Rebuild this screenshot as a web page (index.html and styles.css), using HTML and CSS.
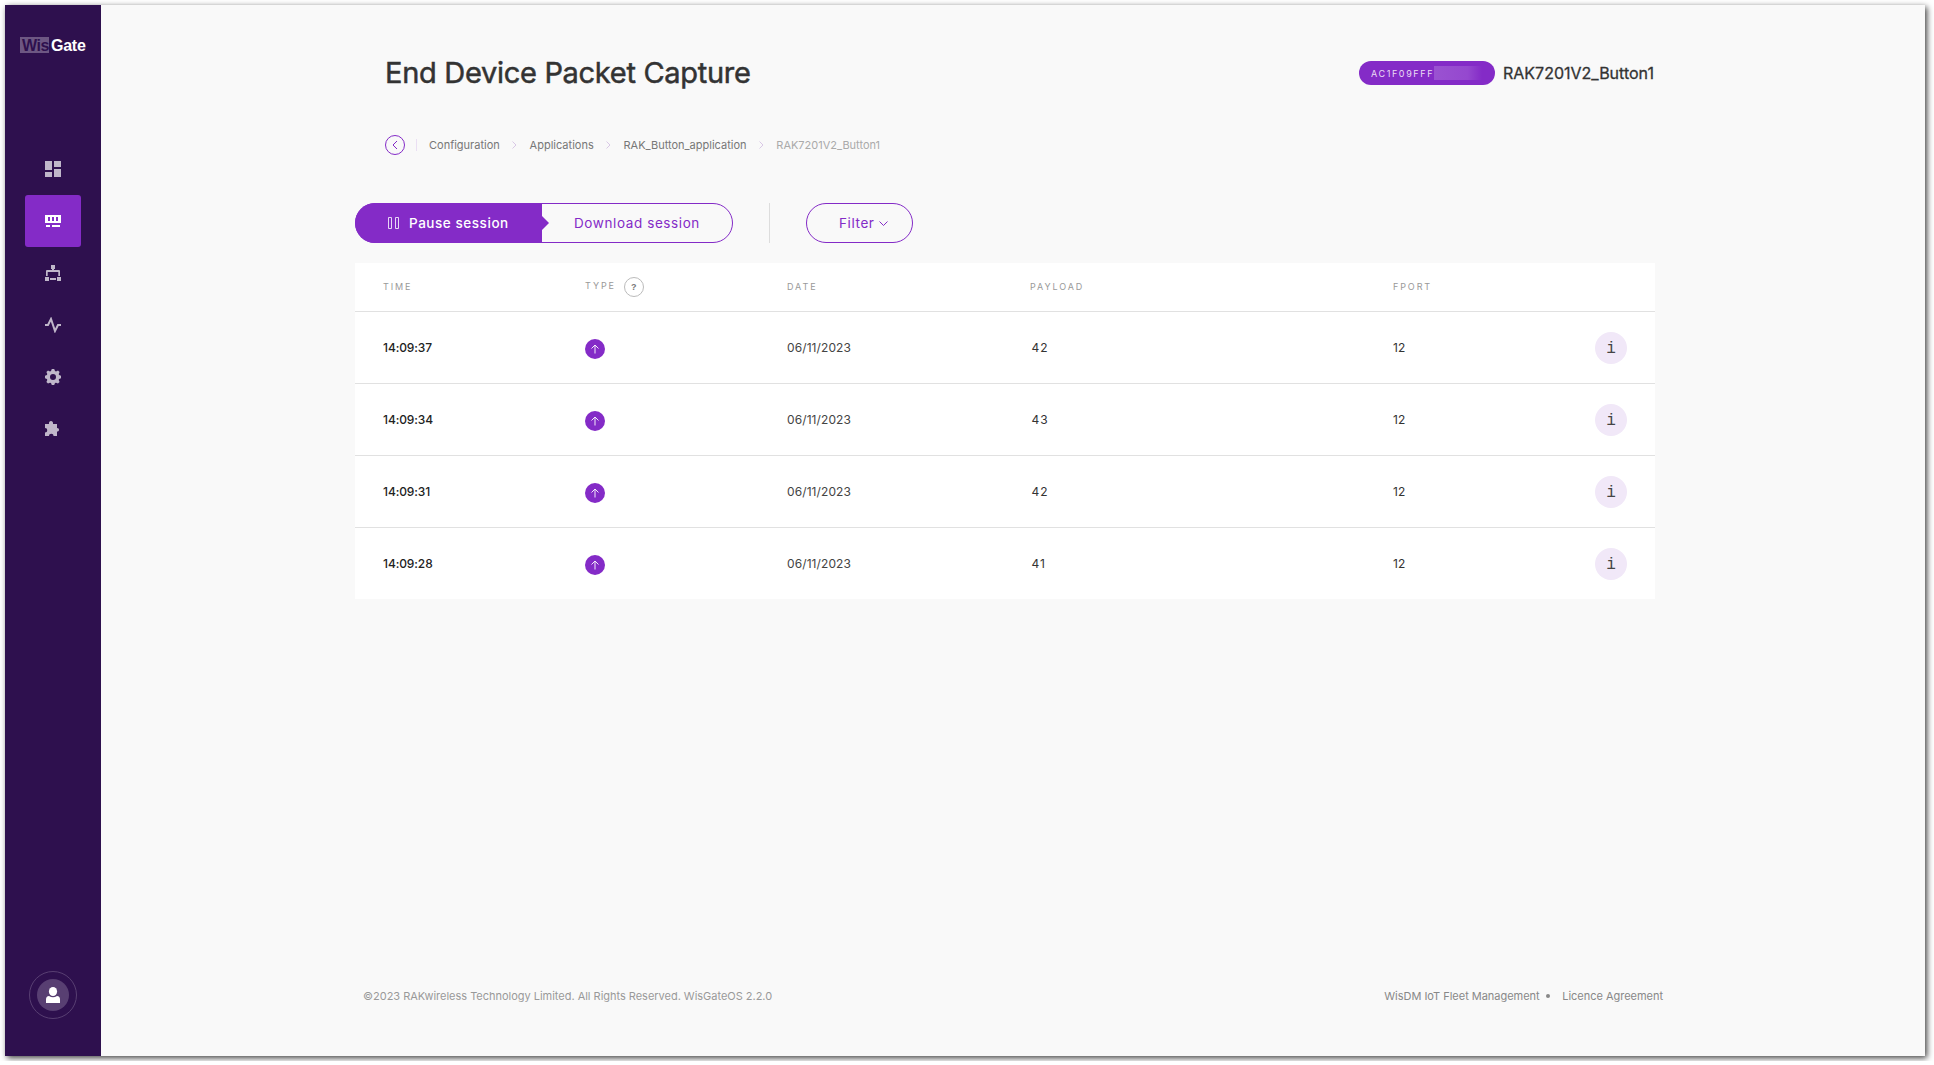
FILE: index.html
```html
<!DOCTYPE html>
<html lang="en">
<head>
<meta charset="utf-8">
<title>End Device Packet Capture</title>
<link rel="stylesheet" href="styles.css">
</head>
<body>
<div class="window">
  <aside class="sidebar">
    <div class="logo"><span class="logo-wis">Wis</span><span class="logo-gate">Gate</span></div>
    <nav class="nav">
      <a class="nav-item"><svg width="16" height="16" viewBox="0 0 16 16"><path d="M0 0h7v9H0zM9 0h7v6H9zM0 11h7v5H0zM9 8h7v8H9z"/></svg></a>
      <a class="nav-item active"><svg width="16" height="16" viewBox="0 0 16 16"><path fill-rule="evenodd" d="M0 2h16v8H0zM3 4v4h2V4zM7 4v4h2V4zM11 4v4h2V4zM1 12h4v2H1zM7 12h8v2H7z"/></svg></a>
      <a class="nav-item"><svg width="16" height="16" viewBox="0 0 16 16"><path d="M6 0h4v4H9v1h5q1 0 1 1v5h-1.700V7H2.700v4H1V6q0-1 1-1h5V4H6zM0 12h4v4H0zM12 12h4v4h-4zM5 13h6v2H5z"/></svg></a>
      <a class="nav-item"><svg width="16" height="16" viewBox="0 0 16 16"><path class="pulse" d="M0 8h3l3-6 4 12 3-6h3"/></svg></a>
      <a class="nav-item"><svg width="16" height="16" viewBox="0 0 16 16"><path fill-rule="evenodd" d="M6.800 0h2.400l.8 2 1 .4 2-.9 1.600 1.600-.9 2 .4.900 1.900.8v2.400l-1.900.8-.4 1 .9 2-1.600 1.600-2-.9-1 .4-.8 1.900H6.800L6 14.100l-1-.4-2 .9L1.400 13l.9-2-.4-1L0 9.200V6.800L1.900 6l.4-.9-.9-2L3 1.500l2 .9 1-.4zM8 5a3 3 0 1 0 0 6 3 3 0 0 0 0-6z"/></svg></a>
      <a class="nav-item"><svg width="16" height="16" viewBox="0 0 16 16"><path d="M0 3h4c-.4-2 .8-3 2-3s2.400 1 2 3h4v4c1.500 0 2 .8 2 1.800S13.500 10.600 12 10.600V15H8.500c0-1.500-.8-2.300-2.200-2.300S4 13.500 4 15H0v-3.500c1.500 0 2.200-.8 2.200-2.200S1.500 7 0 7z"/></svg></a>
    </nav>
    <a class="avatar"><span class="avatar-disc"><svg width="14" height="16" viewBox="0 0 14 16"><ellipse cx="7" cy="4.500" rx="4.100" ry="4.500"/><path d="M0 16v-3.500Q0 9.300 3 9q4 2.500 8 0 3 .3 3 3.500V16z"/></svg></span></a>
  </aside>
  <main class="main">
    <header class="page-head">
      <h1 class="title">End Device Packet Capture</h1>
      <div class="device"><span class="eui"><span>AC1F09FFF</span><span class="eui-hidden"></span></span><span class="device-name">RAK7201V2_Button1</span></div>
    </header>
    <nav class="crumbs">
      <a class="back"><svg width="20" height="20" viewBox="0 0 20 20"><circle cx="10" cy="10" r="9.500"/><path d="M12 6l-4 4 4 4"/></svg></a>
      <span class="crumb-rule"></span>
      <a class="crumb">Configuration</a>
      <svg class="sep" width="5" height="8" viewBox="0 0 5 8"><path d="M.5.500 4 4 .5 7.500"/></svg>
      <a class="crumb">Applications</a>
      <svg class="sep" width="5" height="8" viewBox="0 0 5 8"><path d="M.5.500 4 4 .5 7.500"/></svg>
      <a class="crumb">RAK_Button_application</a>
      <svg class="sep" width="5" height="8" viewBox="0 0 5 8"><path d="M.5.500 4 4 .5 7.500"/></svg>
      <span class="crumb current">RAK7201V2_Button1</span>
    </nav>
    <div class="toolbar">
      <div class="session">
        <button class="pause"><svg width="11" height="12" viewBox="0 0 11 12"><path d="M.5.500h3v11h-3zM7.500.500h3v11h-3z"/></svg><span>Pause session</span></button>
        <button class="download">Download session</button>
      </div>
      <span class="toolbar-rule"></span>
      <button class="filter"><span>Filter</span><svg width="9" height="5" viewBox="0 0 9 5"><path d="M.5.500l4 4 4-4"/></svg></button>
    </div>
    <section class="table">
      <div class="row head">
        <span>TIME</span><span class="type-head"><span>TYPE</span><i class="help">?</i></span><span>DATE</span><span>PAYLOAD</span><span>FPORT</span>
      </div>
      <div class="row"><span class="time">14:09:37</span><svg class="up" width="20" height="20" viewBox="0 0 20 20"><circle cx="10" cy="10" r="10"/><path d="M10 14.500V6.500M6.500 9.500 10 6l3.500 3.500"/></svg><span class="date">06/11/2023</span><span class="payload">42</span><span>12</span><a class="info">i</a></div>
      <div class="row"><span class="time">14:09:34</span><svg class="up" width="20" height="20" viewBox="0 0 20 20"><circle cx="10" cy="10" r="10"/><path d="M10 14.500V6.500M6.500 9.500 10 6l3.500 3.500"/></svg><span class="date">06/11/2023</span><span class="payload">43</span><span>12</span><a class="info">i</a></div>
      <div class="row"><span class="time">14:09:31</span><svg class="up" width="20" height="20" viewBox="0 0 20 20"><circle cx="10" cy="10" r="10"/><path d="M10 14.500V6.500M6.500 9.500 10 6l3.500 3.500"/></svg><span class="date">06/11/2023</span><span class="payload">42</span><span>12</span><a class="info">i</a></div>
      <div class="row"><span class="time">14:09:28</span><svg class="up" width="20" height="20" viewBox="0 0 20 20"><circle cx="10" cy="10" r="10"/><path d="M10 14.500V6.500M6.500 9.500 10 6l3.500 3.500"/></svg><span class="date">06/11/2023</span><span class="payload">41</span><span>12</span><a class="info">i</a></div>
    </section>
    <footer class="footer">
      <span class="copyright">©2023 RAKwireless Technology Limited. All Rights Reserved. WisGateOS 2.2.0</span>
      <div class="links"><a>WisDM IoT Fleet Management</a><span class="dot"></span><a>Licence Agreement</a></div>
    </footer>
  </main>
</div>
</body>
</html>
```
FILE: styles.css
```css
* { box-sizing: border-box; }
body { margin: 0; padding: 5px; background: #fff; font-family: Inter, "Liberation Sans", sans-serif; color: #333; }
button { font: inherit; background: none; border: 0; padding: 0; margin: 0; }
svg { display: block; flex: none; }
.window { display: flex; width: 1920px; height: 1051px; background: #f9f9f9; box-shadow: 2px 2px 6px rgba(0,0,0,.75); }

.sidebar { width: 96px; flex: none; background: #2e104e; display: flex; flex-direction: column; align-items: center; }
.logo { margin-top: 32px; height: 16px; display: flex; align-items: center; font: bold 16px/17px "Liberation Sans", sans-serif; letter-spacing: -.6px; }
.logo-wis { width: 29px; height: 16px; padding-left: 2px; background: #6d5783; color: #2e104e; letter-spacing: -.4px; }
.logo-gate { width: 37px; padding-left: 2px; color: #fff; letter-spacing: -.250px; }
.nav { margin-top: 90px; display: flex; flex-direction: column; }
.nav-item { width: 56px; height: 52px; border-radius: 3px; display: flex; align-items: center; justify-content: center; fill: #c0b7ca; }
.nav-item.active { background: #842bc7; fill: #fff; }
.pulse { fill: none; stroke: #c0b7ca; stroke-width: 2; }
.avatar { margin: auto 0 37px; width: 48px; height: 48px; border: 1px solid #583f72; border-radius: 50%; display: flex; align-items: center; justify-content: center; }
.avatar-disc { width: 32px; height: 32px; border-radius: 50%; background: #583f72; display: flex; align-items: center; justify-content: center; fill: #fff; }

.main { flex: 1; padding: 0 270px 0 254px; display: flex; flex-direction: column; }
.page-head { height: 72px; margin: 32px 0 0 30px; display: flex; align-items: center; justify-content: space-between; }
.title { margin: 0; font-size: 29px; font-weight: 400; line-height: 36px; letter-spacing: -.3px; -webkit-text-stroke: .5px #333; }
.device { display: flex; align-items: center; gap: 8px; }
.eui { width: 136px; height: 24px; border-radius: 12px; background: #842bc7; color: #eadcf5; font-size: 9px; letter-spacing: 1.600px; display: flex; align-items: center; padding-left: 12px; }
.eui-hidden { width: 48px; height: 14px; background: linear-gradient(90deg,#9a52d1,#9548cf 70%,#842bc7); }
.device-name { width: 152px; font-size: 16px; font-weight: 400; -webkit-text-stroke: .3px #333; }

.crumbs { display: flex; align-items: center; height: 20px; margin: 26px 0 0 30px; font-size: 11px; color: #777; }
.back { fill: none; stroke: #842bc7; }
.crumb-rule { width: 1px; height: 12px; margin: 0 12px 0 11px; background: #eadff3; }
.sep { margin: 0 12.300px 0 12.500px; fill: none; stroke: #d9c8e6; }
.crumb.current { color: #aaa; }

.toolbar { display: flex; align-items: center; height: 40px; margin-top: 48px; font-size: 13.500px; letter-spacing: .600px; color: #842bc7; }
.session { display: flex; width: 378px; height: 40px; border: 1px solid #842bc7; border-radius: 20px; }
.pause { position: relative; width: 187px; height: 40px; margin: -1px 0 0 -1px; border-radius: 20px 0 0 20px; background: #842bc7; color: #fff; font-weight: 500; letter-spacing: .550px; display: flex; align-items: center; padding-left: 33px; gap: 10px; }
.pause svg { fill: none; stroke: #e6d5f4; }
.pause::after { content: ""; position: absolute; left: 100%; top: 13px; border: 7px solid transparent; border-left-color: #842bc7; border-right: 0; }
.download { padding: 0 0 0 32px; color: inherit; letter-spacing: inherit; }
.toolbar-rule { width: 1px; height: 40px; margin: 0 36px; background: #ddd; }
.filter { width: 107px; height: 40px; border: 1px solid #842bc7; border-radius: 20px; color: inherit; letter-spacing: inherit; display: flex; align-items: center; padding-left: 32px; }
.filter span { width: 39.500px; text-align: left; }
.filter svg { fill: none; stroke: #842bc7; }

.table { margin-top: 20px; background: #fff; }
.row { display: grid; grid-template-columns: 202px 202px 243px 363px 202px 32px; align-items: center; height: 72px; padding-left: 28px; border-top: 1px solid #e1e1e1; font-size: 12px; }
.row.head { height: 48px; border-top: 0; font-size: 9px; letter-spacing: 1.900px; color: #999; }
.row.head > span:not(.type-head) { padding-bottom: 1px; }
.type-head { display: flex; align-items: center; gap: 8px; }
.type-head span { padding-bottom: 3px; }
.help { width: 20px; height: 20px; border: 1px solid #bbb; border-radius: 50%; font: bold 9px/19px "Liberation Sans", sans-serif; letter-spacing: 0; text-align: center; color: #777; }
.time { font-weight: 500; color: #222; letter-spacing: -.1px; }
.date { letter-spacing: .1px; color: #444; }
.up { margin-top: 2px; fill: #842bc7; }
.up path { fill: none; stroke: #f3eafa; }
.payload { padding-left: 1.500px; letter-spacing: .9px; }
.info { width: 32px; height: 32px; border-radius: 50%; background: #f1e8f8; font: 16px/35px "Liberation Mono", monospace; text-align: center; color: #444; }

.footer { margin: auto -8px 53px 8px; display: flex; align-items: center; justify-content: space-between; font-size: 11px; line-height: 14px; color: #888; }
.copyright { letter-spacing: -.020px; color: #999; }
.links { display: flex; align-items: center; letter-spacing: -.020px; }
.dot { width: 4px; height: 4px; border-radius: 50%; background: #888; margin: 0 12.500px 0 6px; }
```
